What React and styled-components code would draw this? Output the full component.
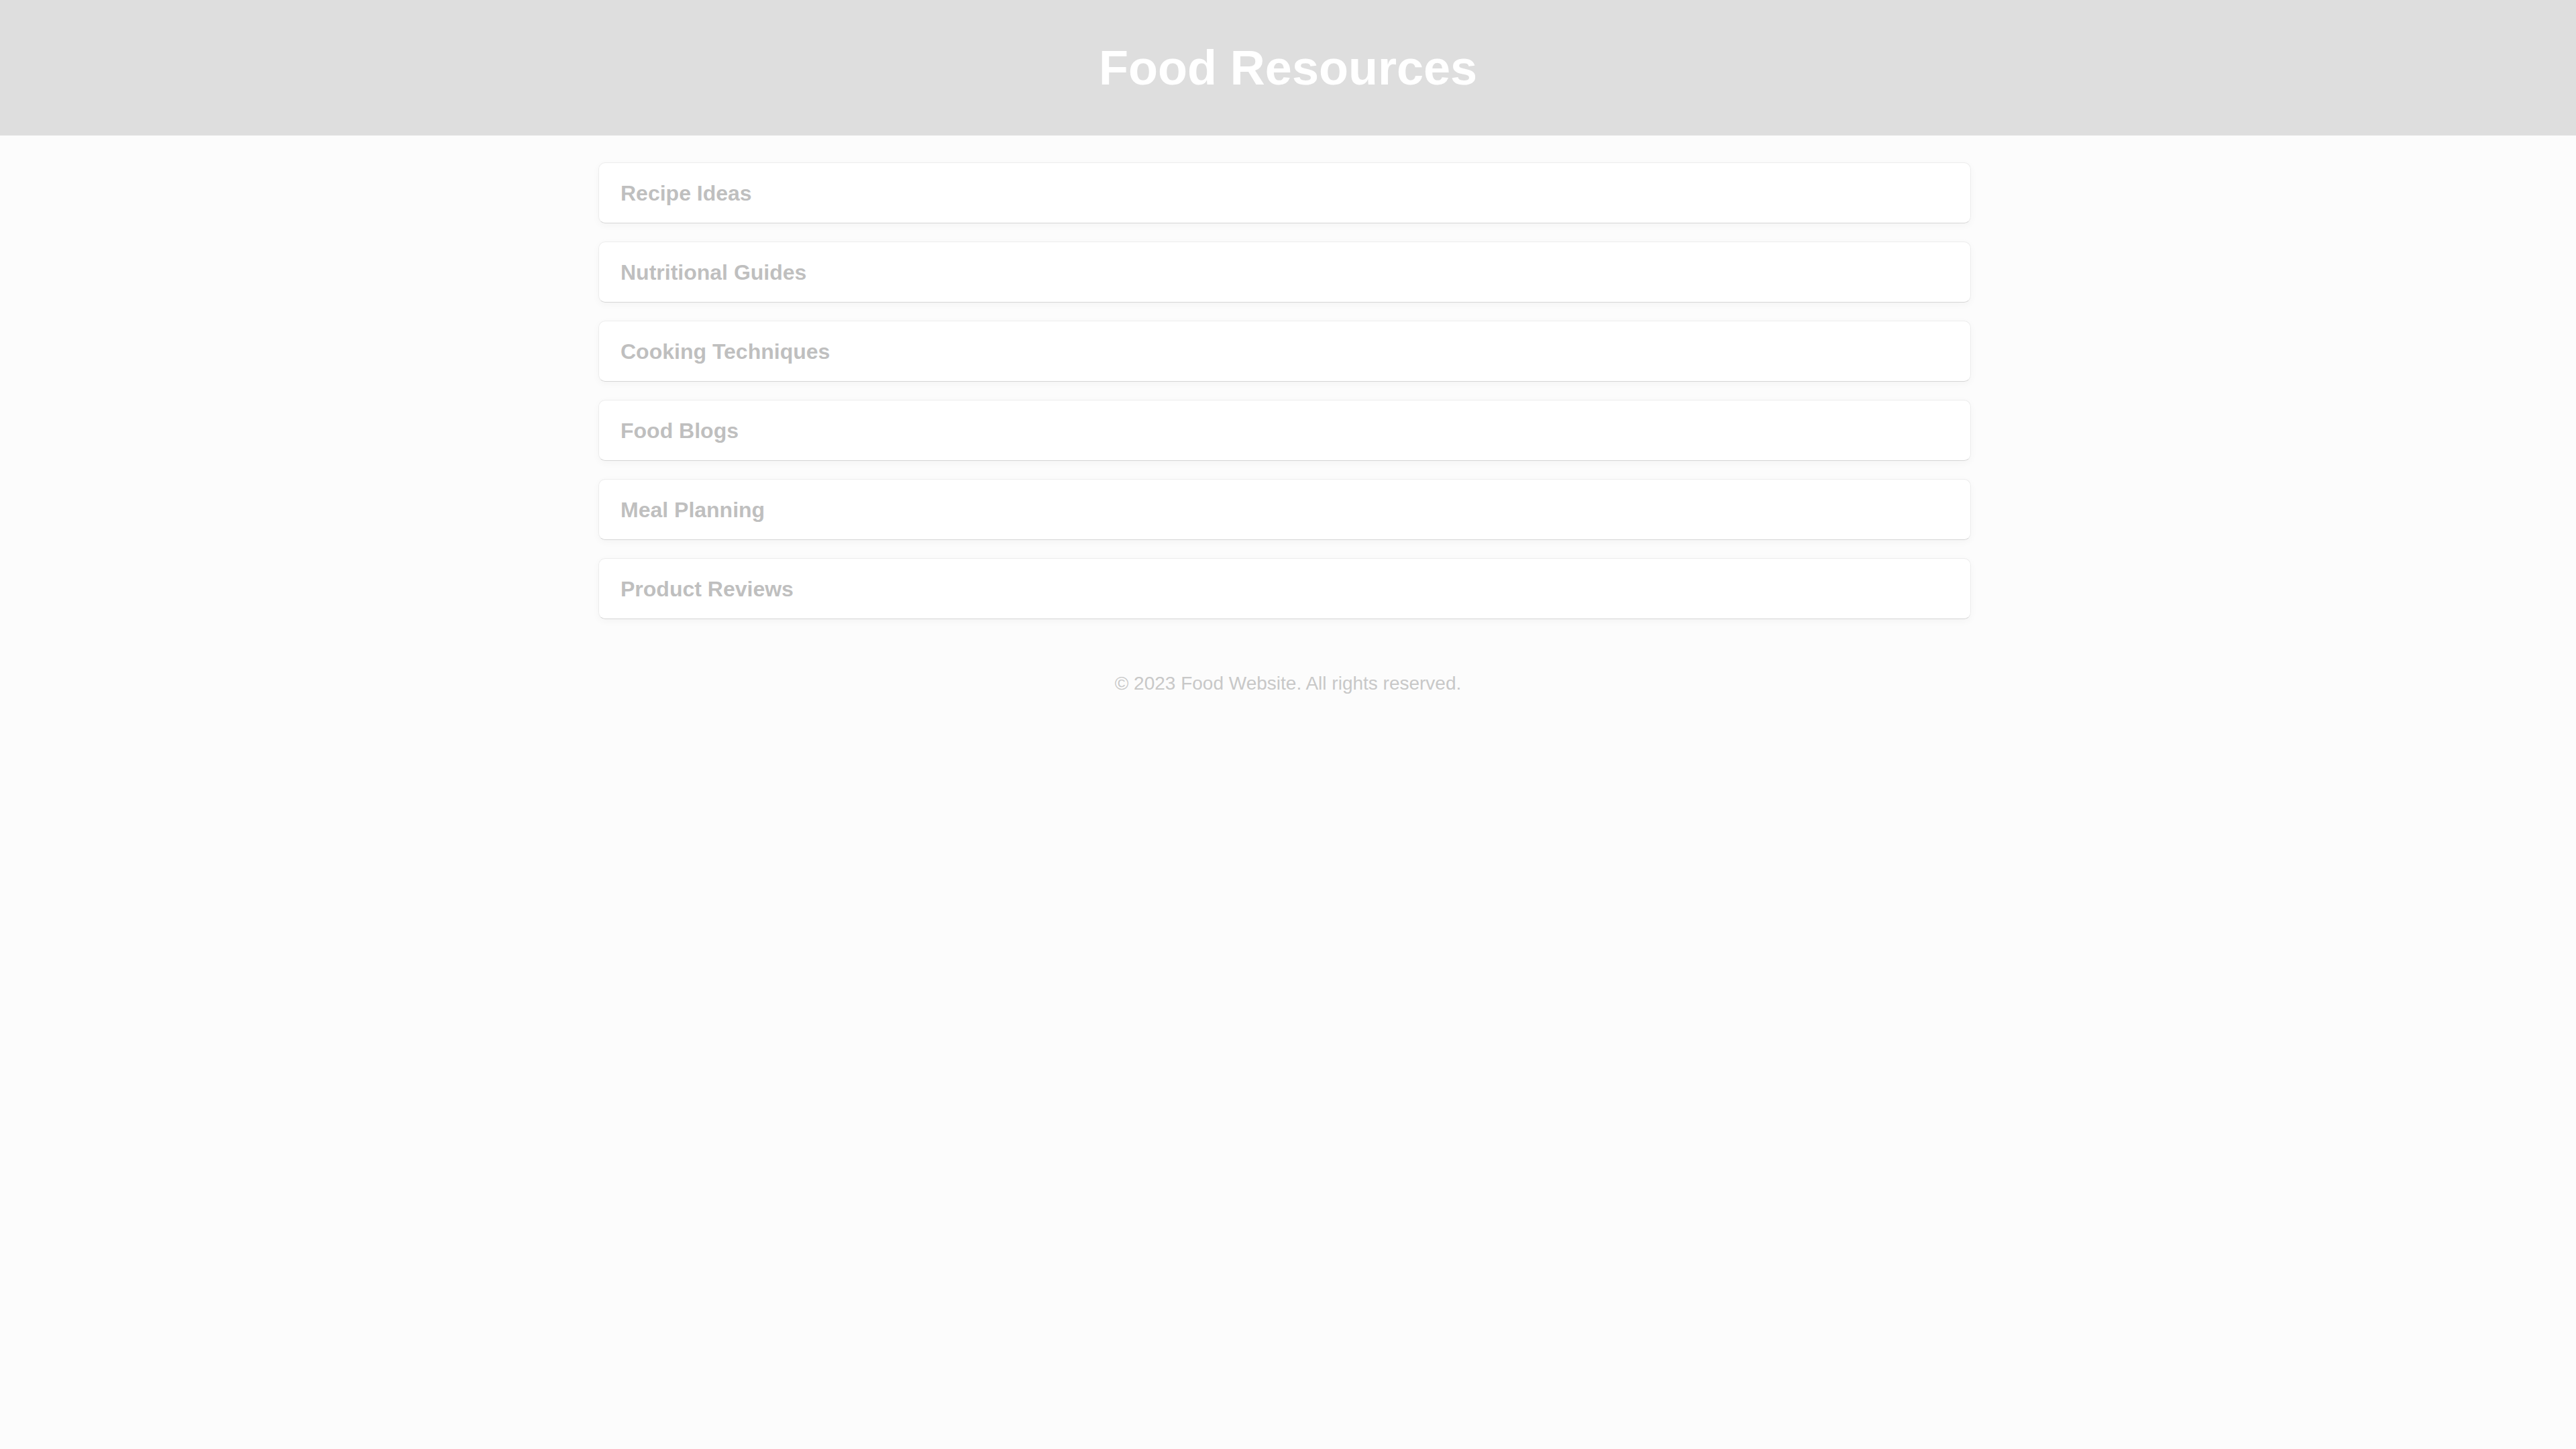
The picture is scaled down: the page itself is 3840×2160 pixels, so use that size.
import React from 'react';
import styled, { createGlobalStyle } from 'styled-components';

const GlobalStyle = createGlobalStyle`
  html, body {
    margin: 0;
    padding: 0;
    background: #fcfcfc;
    font-family: "Liberation Sans", Arial, sans-serif;
  }
`;

const Page = styled.div`
  min-height: 100vh;
  background: #fcfcfc;
`;

const Header = styled.header`
  height: 202px;
  background: #dedede;
  display: flex;
  align-items: center;
  justify-content: center;
`;

const Title = styled.h1`
  margin: 0;
  font-size: 72px;
  font-weight: 700;
  color: #ffffff;
  line-height: 1.15;
`;

const Main = styled.main`
  width: 2046px;
  margin-left: calc(50% - 1028px);
  padding-top: 40px;
  display: flex;
  flex-direction: column;
  gap: 27px;
`;

const Card = styled.div`
  background: #ffffff;
  border: 1px solid #ededed;
  border-bottom-color: #d6d6d6;
  border-radius: 10px;
  padding: 27px 32px 25px;
  box-shadow: 0 3px 12px rgba(0, 0, 0, 0.035);
`;

const CardTitle = styled.h2`
  margin: 0;
  font-size: 32px;
  font-weight: 700;
  line-height: 37px;
  color: #bfbfbf;
`;

const Footer = styled.footer`
  margin-top: 80px;
  text-align: center;
  font-size: 28px;
  line-height: 32px;
  color: #c8c8c8;
`;

const resources = [
  'Recipe Ideas',
  'Nutritional Guides',
  'Cooking Techniques',
  'Food Blogs',
  'Meal Planning',
  'Product Reviews',
];

const App = () => {
  return (
    <Page>
      <GlobalStyle />
      <Header>
        <Title>Food Resources</Title>
      </Header>
      <Main>
        {resources.map((name) => (
          <Card key={name}>
            <CardTitle>{name}</CardTitle>
          </Card>
        ))}
      </Main>
      <Footer>© 2023 Food Website. All rights reserved.</Footer>
    </Page>
  );
};

export default App;
